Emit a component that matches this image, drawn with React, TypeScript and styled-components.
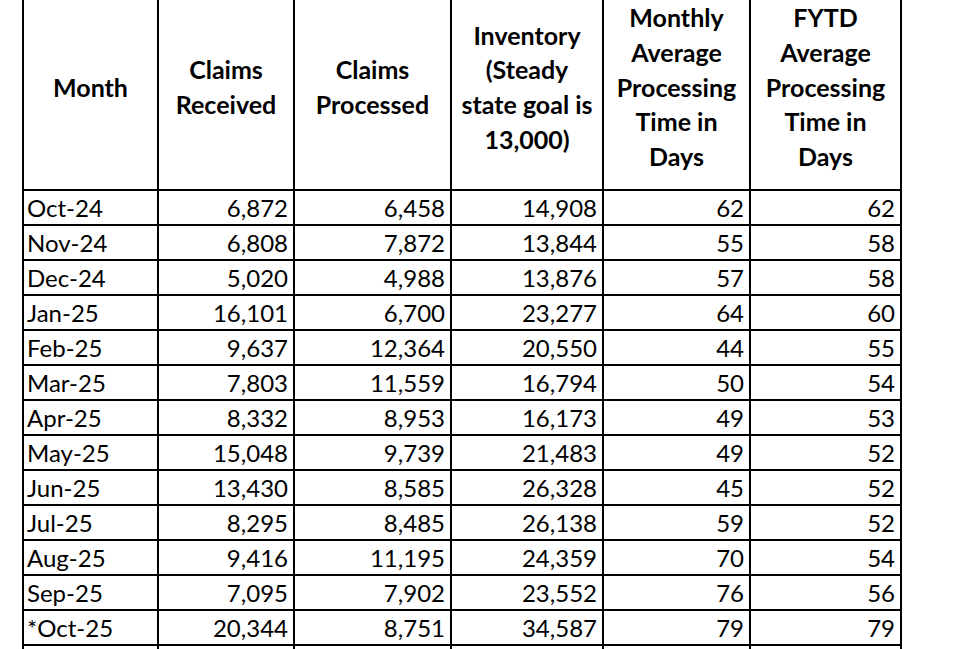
import React from 'react';
import styled, { createGlobalStyle } from 'styled-components';

const GlobalStyle = createGlobalStyle`
  html, body {
    margin: 0;
    padding: 0;
    background: #ffffff;
  }
  body {
    font-family: Lato, "Open Sans", "Liberation Sans", sans-serif;
    color: #000000;
  }
`;

const Page = styled.div`
  width: 956px;
  height: 649px;
  overflow: hidden;
  background: #ffffff;
`;

const Sheet = styled.div`
  display: grid;
  grid-template-columns: 135px 136px 157px 152px 147px 151px;
  grid-template-rows: 191px;
  grid-auto-rows: 35px;
  margin-left: 22px;
  width: max-content;
  border-left: 2px solid #000;
`;

const HeaderCell = styled.div`
  box-sizing: border-box;
  height: 191px;
  padding: 0 1px 15px;
  border-right: 2px solid #000;
  border-bottom: 2px solid #000;
  display: flex;
  align-items: center;
  justify-content: center;
  text-align: center;
  font-weight: 700;
  font-size: 25px;
  line-height: 34.7px;
  white-space: nowrap;
`;

const Cell = styled.div<{ $align?: 'left' | 'right' }>`
  box-sizing: border-box;
  height: 35px;
  padding: 0 ${(p) => (p.$align === 'left' ? '0' : '5px')} 0
    ${(p) => (p.$align === 'left' ? '3px' : '0')};
  border-right: 2px solid #000;
  border-bottom: 2px solid #000;
  text-align: ${(p) => p.$align ?? 'right'};
  font-size: 24px;
  line-height: 34px;
  white-space: nowrap;
`;

const headers: string[][] = [
  ['Month'],
  ['Claims', 'Received'],
  ['Claims', 'Processed'],
  ['Inventory', '(Steady', 'state goal is', '13,000)'],
  ['Monthly', 'Average', 'Processing', 'Time in', 'Days'],
  ['FYTD', 'Average', 'Processing', 'Time in', 'Days'],
];

const rows: string[][] = [
  ['Oct-24', '6,872', '6,458', '14,908', '62', '62'],
  ['Nov-24', '6,808', '7,872', '13,844', '55', '58'],
  ['Dec-24', '5,020', '4,988', '13,876', '57', '58'],
  ['Jan-25', '16,101', '6,700', '23,277', '64', '60'],
  ['Feb-25', '9,637', '12,364', '20,550', '44', '55'],
  ['Mar-25', '7,803', '11,559', '16,794', '50', '54'],
  ['Apr-25', '8,332', '8,953', '16,173', '49', '53'],
  ['May-25', '15,048', '9,739', '21,483', '49', '52'],
  ['Jun-25', '13,430', '8,585', '26,328', '45', '52'],
  ['Jul-25', '8,295', '8,485', '26,138', '59', '52'],
  ['Aug-25', '9,416', '11,195', '24,359', '70', '54'],
  ['Sep-25', '7,095', '7,902', '23,552', '76', '56'],
  ['*Oct-25', '20,344', '8,751', '34,587', '79', '79'],
  ['', '', '', '', '', ''],
];

export default function App() {
  return (
    <Page>
      <GlobalStyle />
      <Sheet>
        {headers.map((lines, i) => (
          <HeaderCell key={`h${i}`}>
            <div>
              {lines.map((l, j) => (
                <div key={j}>{l}</div>
              ))}
            </div>
          </HeaderCell>
        ))}
        {rows.map((row, r) =>
          row.map((value, c) => (
            <Cell key={`${r}-${c}`} $align={c === 0 ? 'left' : 'right'}>
              {value}
            </Cell>
          ))
        )}
      </Sheet>
    </Page>
  );
}
